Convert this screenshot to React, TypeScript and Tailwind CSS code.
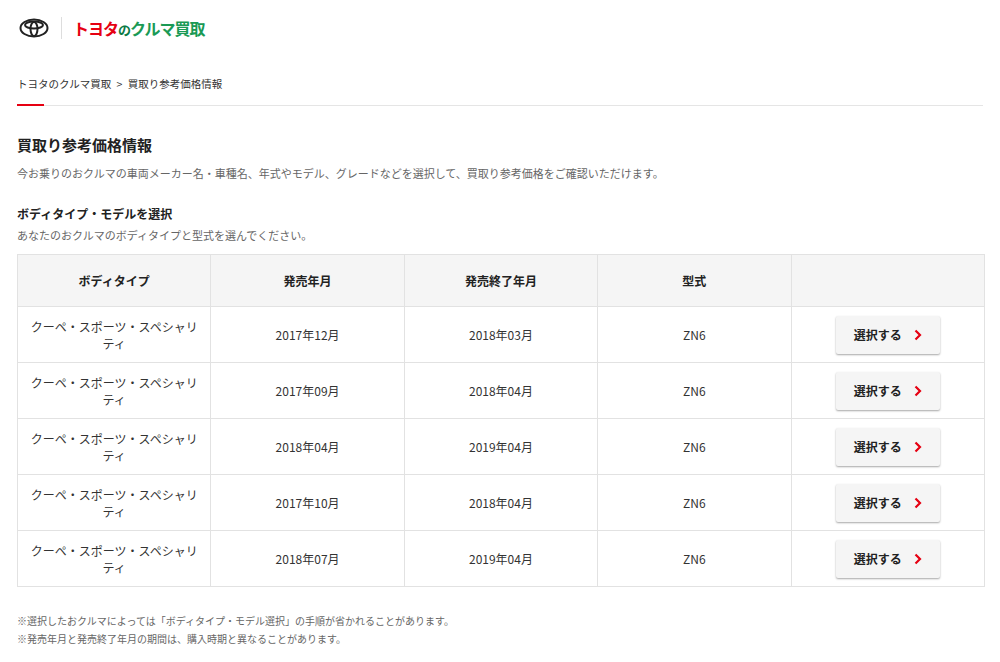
const rows = [
  ["2017年12月", "2018年03月"],
  ["2017年09月", "2018年04月"],
  ["2018年04月", "2019年04月"],
  ["2017年10月", "2018年04月"],
  ["2018年07月", "2019年04月"],
];

const font = { fontFamily: '"Noto Sans CJK JP", "Noto Sans", sans-serif' };

export default function App() {
  return (
    <div className="w-[1000px] h-[662px] bg-white text-[#333] overflow-hidden" style={font}>
      <header className="flex items-center h-[56px] pl-[19px]">
        <svg width="30" height="20" viewBox="0 0 30 20" fill="none" stroke="#222" strokeWidth="2">
          <ellipse cx="15" cy="10" rx="13.5" ry="8.5" />
          <ellipse cx="15" cy="7" rx="9" ry="3.5" />
          <ellipse cx="15" cy="11" rx="3.5" ry="7" />
        </svg>
        <div className="w-px h-[22px] bg-[#ddd] ml-[12px] mr-[11px]" />
        <div className="text-[16px] font-bold tracking-[-1px] leading-none">
          <span className="text-[#e60012]">トヨタ</span>
          <span className="text-[#0a7a45] text-[13px]">の</span>
          <span className="text-[#1a9a55]">クルマ買取</span>
        </div>
      </header>
      <div className="mx-[17px] pt-[20px] text-[10.5px] text-[#333]">
        トヨタのクルマ買取 <span className="mx-[3px]">&gt;</span> 買取り参考価格情報
      </div>
      <div className="mx-[17px] mt-[13px] h-px bg-[#e5e5e5] relative">
        <div className="absolute left-0 -top-[1px] w-[27px] h-[2px] bg-[#e60012]" />
      </div>
      <div className="px-[17px]">
        <h1 className="mt-[28px] text-[15px] font-bold text-[#222]">買取り参考価格情報</h1>
        <p className="mt-[9px] text-[11px] text-[#666]">今お乗りのおクルマの車両メーカー名・車種名、年式やモデル、グレードなどを選択して、買取り参考価格をご確認いただけます。</p>
        <h2 className="mt-[23px] text-[12px] font-bold text-[#222]">ボディタイプ・モデルを選択</h2>
        <p className="mt-[4px] text-[11px] text-[#666]">あなたのおクルマのボディタイプと型式を選んでください。</p>
        <table className="mt-[11px] w-[968px] border-collapse text-[12px] table-fixed">
          <thead>
            <tr className="h-[52px] bg-[#f5f5f5]">
              {["ボディタイプ", "発売年月", "発売終了年月", "型式", ""].map((h, i) => (
                <th key={i} className="border border-[#e2e2e2] font-bold text-[#222]">{h}</th>
              ))}
            </tr>
          </thead>
          <tbody>
            {rows.map((r, i) => (
              <tr key={i} className="h-[56px]">
                <td className="border border-[#e2e2e2] text-center leading-[17px] px-[12px]">クーペ・スポーツ・スペシャリティ</td>
                <td className="border border-[#e2e2e2] text-center">{r[0]}</td>
                <td className="border border-[#e2e2e2] text-center">{r[1]}</td>
                <td className="border border-[#e2e2e2] text-center">ZN6</td>
                <td className="border border-[#e2e2e2]">
                  <div className="flex justify-center">
                    <button className="w-[104px] h-[38px] bg-[#f5f5f5] rounded-[2px] shadow-[0_1px_2px_rgba(0,0,0,0.35)] flex items-center justify-center gap-[12px] font-bold text-[12px] text-[#222]">
                      選択する
                      <svg width="8" height="12" viewBox="0 0 8 12" fill="none" stroke="#e60012" strokeWidth="2.2">
                        <path d="M1.5 1.5 6 6l-4.5 4.5" />
                      </svg>
                    </button>
                  </div>
                </td>
              </tr>
            ))}
          </tbody>
        </table>
        <p className="mt-[26px] text-[10px] text-[#666]">※選択したおクルマによっては「ボディタイプ・モデル選択」の手順が省かれることがあります。</p>
        <p className="mt-[3px] text-[10px] text-[#666]">※発売年月と発売終了年月の期間は、購入時期と異なることがあります。</p>
      </div>
    </div>
  );
}
